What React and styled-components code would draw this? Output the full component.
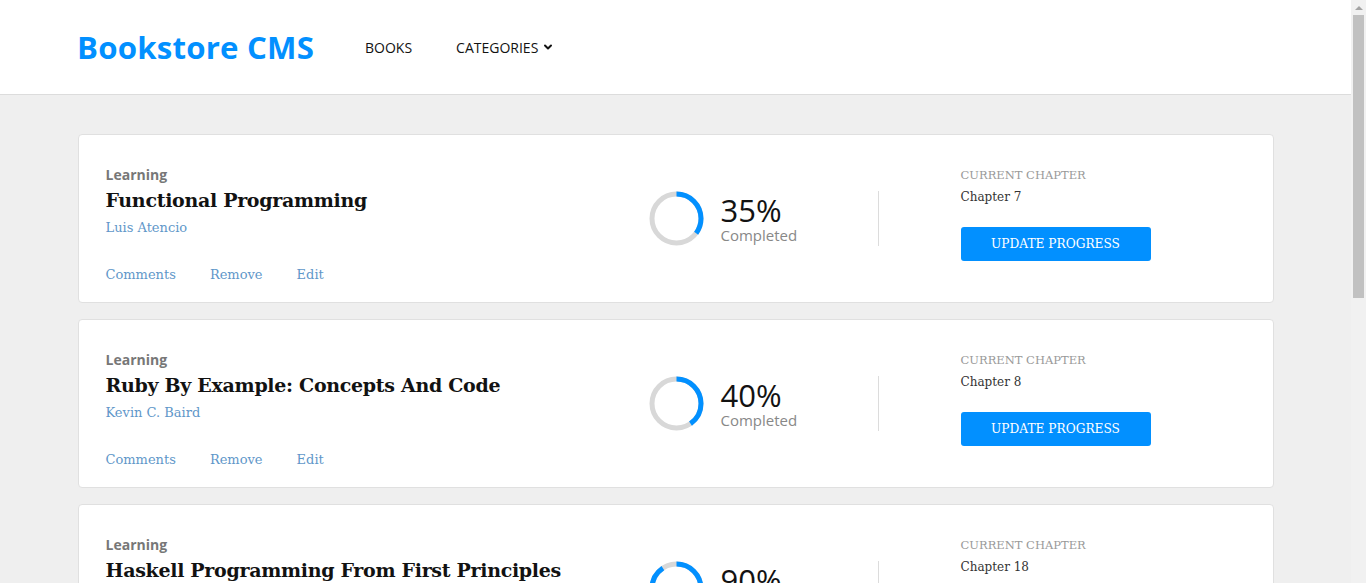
import styled, { createGlobalStyle } from "styled-components";
import { ChevronDown } from "lucide-react";

const GlobalStyle = createGlobalStyle`
  html, body {
    margin: 0;
    padding: 0;
    background-color: #efefef;
  }
  body {
    margin-right: 15px;
  }
  * {
    box-sizing: border-box;
  }
`;

const sans = `"Open Sans", "Noto Sans", sans-serif`;
const slab = `"DejaVu Serif", "Liberation Serif", serif`;

// stand-in for the browser's scrollbar seen in the screenshot
const ScrollTrack = styled.div`
  position: fixed;
  top: 0;
  right: 0;
  width: 15px;
  height: 100vh;
  background-color: #f1f1f1;
  display: flex;
  flex-direction: column;
  align-items: center;
  z-index: 10;
`;

const ScrollArrow = styled.div`
  height: 15px;
  display: flex;
  align-items: center;
  justify-content: center;

  &::before {
    content: "";
    border-left: 4px solid transparent;
    border-right: 4px solid transparent;
    border-bottom: 4px solid #a3a3a3;
  }
`;

const ScrollThumb = styled.div`
  width: 11px;
  height: 283px;
  background-color: #c1c1c1;
`;

const Header = styled.header`
  height: 95px;
  background-color: white;
  border-bottom: 1px solid #dcdcdc;
  display: flex;
  align-items: center;
  padding: 0 77px;
`;

const Logo = styled.h1`
  font-family: ${sans};
  font-size: 31.2px;
  font-weight: 700;
  color: #0290ff;
  margin: 0 51px 0 0;
  letter-spacing: 0.2px;
`;

const Nav = styled.nav`
  display: flex;
  align-items: center;
  gap: 44px;
`;

const NavLink = styled.a`
  font-family: ${sans};
  font-size: 14px;
  color: #121212;
  text-transform: uppercase;
  display: flex;
  align-items: center;
  gap: 4px;
  cursor: pointer;
`;

const Main = styled.main`
  max-width: 1196px;
  margin: 0 auto;
  padding: 39px 0 120px;
  display: flex;
  flex-direction: column;
  gap: 16px;
`;

const Card = styled.div`
  background-color: white;
  border: 1px solid #e0e0e0;
  border-radius: 4px;
  padding: 31px 26px 14px 27px;
  display: flex;
  align-items: flex-start;
  height: 169px;
`;

const BookInfo = styled.div`
  flex: 1;
`;

const Genre = styled.p`
  font-family: ${sans};
  font-size: 14px;
  font-weight: 700;
  color: #777;
  margin: 0;
  line-height: 18px;
`;

const Title = styled.h2`
  font-family: ${slab};
  font-size: 19px;
  font-weight: 700;
  color: #121212;
  margin: 1px 0 0;
  line-height: 30px;
  letter-spacing: -0.3px;
`;

const Author = styled.p`
  font-family: ${slab};
  font-size: 13px;
  color: #5f97c9;
  margin: 0;
  line-height: 26px;
`;

const Actions = styled.div`
  display: flex;
  margin-top: 21px;
`;

const Action = styled.a`
  font-family: ${slab};
  font-size: 13px;
  color: #5f97c9;
  line-height: 26px;
  padding-right: 34px;
  cursor: pointer;
`;

const ProgressBlock = styled.div`
  width: 230px;
  align-self: center;
  display: flex;
  align-items: center;
  gap: 17px;
  border-right: 1px solid #dcdcdc;
  height: 55px;
  margin-top: -17px;
`;

const Percent = styled.div`
  font-family: ${sans};
  font-size: 31px;
  color: #121212;
  line-height: 32px;
`;

const Completed = styled.div`
  font-family: ${sans};
  font-size: 15px;
  color: #888;
  line-height: 18px;
`;

const ChapterBlock = styled.div`
  margin-left: 82px;
  width: 286px;
`;

const ChapterLabel = styled.p`
  font-family: ${slab};
  font-size: 11.5px;
  color: #999;
  margin: 0;
  line-height: 18px;
  text-transform: uppercase;
`;

const ChapterName = styled.p`
  font-family: ${slab};
  font-size: 12px;
  color: #333;
  margin: 4px 0 0;
  line-height: 18px;
`;

const UpdateButton = styled.button`
  margin-top: 21px;
  width: 190px;
  height: 34px;
  background-color: #0290ff;
  border: none;
  border-radius: 3px;
  color: white;
  font-family: ${slab};
  font-size: 12.2px;
  text-transform: uppercase;
  cursor: pointer;
`;

const Ring = ({ percent }) => {
  const r = 24.5;
  const c = 2 * Math.PI * r;
  return (
    <svg width="55" height="55" viewBox="0 0 55 55">
      <circle cx="27.5" cy="27.5" r={r} fill="none" stroke="#d8d8d8" strokeWidth="5" />
      <circle
        cx="27.5"
        cy="27.5"
        r={r}
        fill="none"
        stroke="#0290ff"
        strokeWidth="5"
        strokeDasharray={`${(c * percent) / 100} ${c}`}
        transform="rotate(-90 27.5 27.5)"
      />
    </svg>
  );
};

const books = [
  { title: "Functional Programming", author: "Luis Atencio", percent: 35, chapter: "Chapter 7" },
  { title: "Ruby By Example: Concepts And Code", author: "Kevin C. Baird", percent: 40, chapter: "Chapter 8" },
  { title: "Haskell Programming From First Principles", author: "Christopher Allen", percent: 90, chapter: "Chapter 18" },
];

const App = () => (
  <>
    <GlobalStyle />
    <ScrollTrack>
      <ScrollArrow />
      <ScrollThumb />
    </ScrollTrack>
    <Header>
      <Logo>Bookstore CMS</Logo>
      <Nav>
        <NavLink>Books</NavLink>
        <NavLink>
          Categories <ChevronDown size={12} strokeWidth={4} />
        </NavLink>
      </Nav>
    </Header>
    <Main>
      {books.map((book) => (
        <Card key={book.title}>
          <BookInfo>
            <Genre>Learning</Genre>
            <Title>{book.title}</Title>
            <Author>{book.author}</Author>
            <Actions>
              <Action>Comments</Action>
              <Action>Remove</Action>
              <Action>Edit</Action>
            </Actions>
          </BookInfo>
          <ProgressBlock>
            <Ring percent={book.percent} />
            <div>
              <Percent>{book.percent}%</Percent>
              <Completed>Completed</Completed>
            </div>
          </ProgressBlock>
          <ChapterBlock>
            <ChapterLabel>Current Chapter</ChapterLabel>
            <ChapterName>{book.chapter}</ChapterName>
            <UpdateButton>Update Progress</UpdateButton>
          </ChapterBlock>
        </Card>
      ))}
    </Main>
  </>
);

export default App;
